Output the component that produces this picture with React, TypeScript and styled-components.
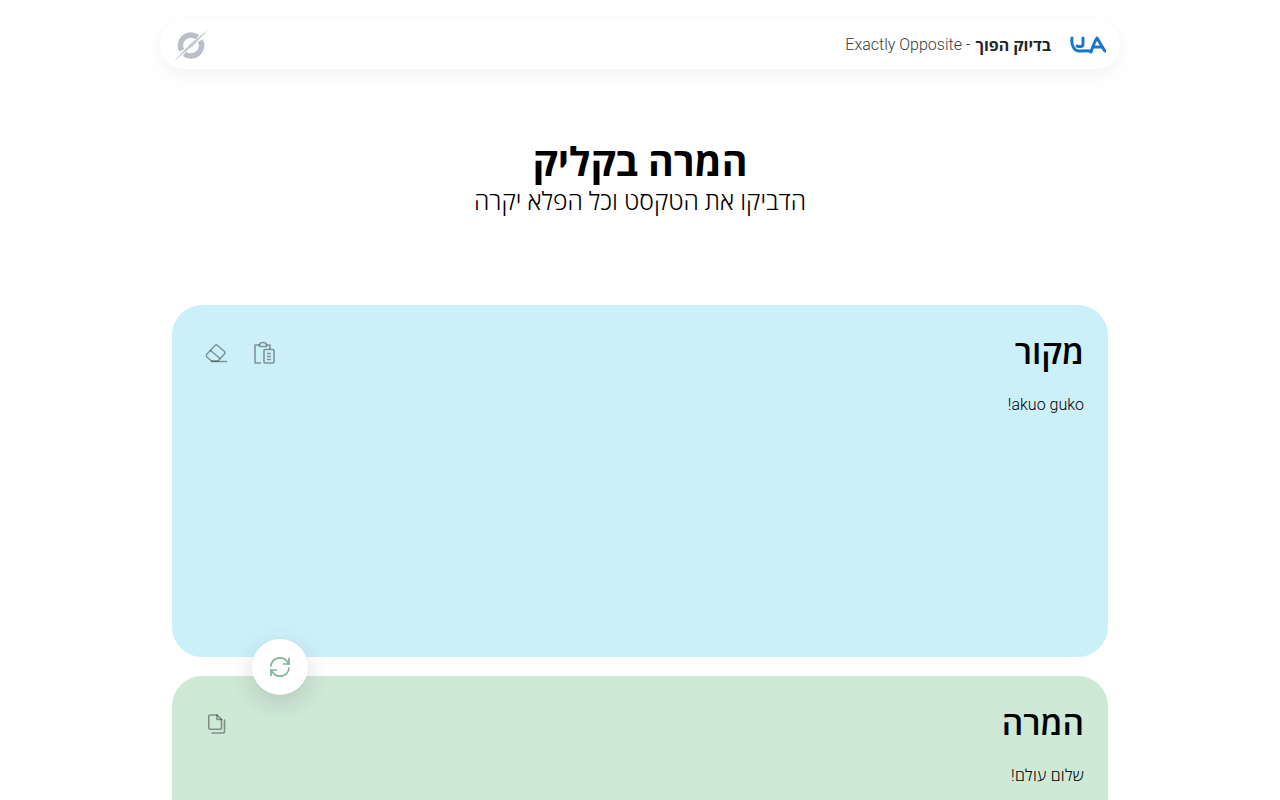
import styled, { createGlobalStyle } from "styled-components";

const GlobalStyle = createGlobalStyle`
  html, body {
    margin: 0;
    padding: 0;
    background: #fff;
    overflow: hidden;
    height: 800px;
  }
  body {
    font-family: Roboto, "Open Sans", "Noto Sans", sans-serif;
    color: #000;
  }
  * {
    box-sizing: border-box;
  }
`;

function BrandLogo() {
  return (
    <LogoImage width="38" height="22" viewBox="0 0 38 22" fill="none" stroke="#1976d2" strokeWidth="3" strokeLinecap="round" strokeLinejoin="round">
      <path d="M4 4 C3 11 6 17 11 17 C15 17 19 16.5 22 17" />
      <path d="M15 4 V10 C15 13 12 13 9 12" />
      <path d="M23 18 C25 12 27 7 29 4 C31 7 34 13 37 17" />
      <path d="M25.5 13 H34" />
    </LogoImage>
  );
}

function SyncMark() {
  return (
    <LogoImage width="38" height="34" viewBox="0 0 38 34" fill="none">
      <path d="M25.5 9.2 A10.5 10.5 0 0 0 9.7 22.4" stroke="#b9bec8" strokeWidth="5.5" />
      <path d="M28.3 12.6 A10.5 10.5 0 0 1 12.5 25.8" stroke="#b9bec8" strokeWidth="5.5" />
      <path d="M2 33 L18.4 15.8 L37 1 L20.6 18.2 Z" fill="#c6cad2" />
    </LogoImage>
  );
}

function EraserIcon() {
  return (
    <svg width="24" height="24" viewBox="0 0 24 24" fill="none" stroke="currentColor" strokeWidth="1.6" strokeLinejoin="round" strokeLinecap="round">
      <path d="M2.5 13.5 L11 4.5 Q12.2 3.4 13.5 4.5 L20.5 10.5 Q21.5 11.7 20.5 13 L14 20 H7.5 L2.8 16 Q2 14.7 2.5 13.5 Z" />
      <path d="M6.5 9.5 L15.5 17" />
      <path d="M7.5 20.5 H22.5" />
    </svg>
  );
}

function PasteIcon() {
  return (
    <svg width="24" height="24" viewBox="0 0 24 24" fill="none" stroke="currentColor" strokeWidth="1.6" strokeLinejoin="round">
      <path d="M7.5 4 H3 V22 H9" />
      <path d="M7.5 5.5 V3.5 Q8 1.5 11 1.5 Q14 1.5 14.5 3.5 V5.5 H7.5 Z" />
      <path d="M14.5 4 H18 V8" />
      <rect x="12" y="8.5" width="10" height="13.5" rx="1" />
      <path d="M15 12.5 H19 M15 15.5 H19 M15 18.5 H19" />
    </svg>
  );
}

function CopyIcon() {
  return (
    <svg width="24" height="24" viewBox="0 0 24 24" fill="none" stroke="currentColor" strokeWidth="1.6" strokeLinejoin="round" strokeLinecap="round">
      <path d="M6 3 H13 L17.5 7.5 V16 Q17.5 17.2 16.3 17.2 H6 Q4.8 17.2 4.8 16 V4.2 Q4.8 3 6 3 Z" />
      <path d="M13 3 V7.5 H17.5" />
      <path d="M20.5 8 V19.8 Q20.5 21 19.3 21 H8" />
    </svg>
  );
}

function SwapIcon() {
  return (
    <svg width="24" height="24" viewBox="0 0 24 24" fill="none" stroke="#7fb398" strokeWidth="1.7" strokeLinecap="round" strokeLinejoin="round">
      <path d="M3 11 A9 9 0 0 1 19.5 7 L21 9" />
      <path d="M21 3.5 V9 H15.5" />
      <path d="M21 13 A9 9 0 0 1 4.5 17 L3 15" />
      <path d="M3 20.5 V15 H8.5" />
    </svg>
  );
}

export default function App() {
  return (
    <Page dir="rtl">
      <GlobalStyle />
      <Header>
        <Brand>
          <BrandLogo />
          <BrandName>בדיוק הפוך</BrandName>
          <BrandSub>- Exactly Opposite</BrandSub>
        </Brand>
        <SyncMark />
      </Header>
      <Hero>
        <Title>המרה בקליק</Title>
        <Subtitle>הדביקו את הטקסט וכל הפלא יקרה</Subtitle>
      </Hero>
      <Panels>
        <Panel $tone="#ccf0f8" $height={352}>
          <PanelHead>
            <PanelTitle>מקור</PanelTitle>
            <Tools>
              <Tool aria-label="paste"><PasteIcon /></Tool>
              <Tool aria-label="clear"><EraserIcon /></Tool>
            </Tools>
          </PanelHead>
          <PanelText>akuo guko!</PanelText>
        </Panel>
        <SwapButton aria-label="swap"><SwapIcon /></SwapButton>
        <Panel $tone="#cfe9d7" $height={352}>
          <PanelHead>
            <PanelTitle>המרה</PanelTitle>
            <Tools>
              <Tool aria-label="copy"><CopyIcon /></Tool>
            </Tools>
          </PanelHead>
          <PanelText $spaced>שלום עולם!</PanelText>
        </Panel>
      </Panels>
    </Page>
  );
}

const Page = styled.div`
  width: 960px;
  margin: 0 auto;
  padding-top: 20px;
`;

const Header = styled.header`
  display: flex;
  justify-content: space-between;
  align-items: center;
  height: 49px;
  padding: 0 14px 0 12px;
  background: #fff;
  border-radius: 25px;
  box-shadow: 0 6px 20px rgba(0, 0, 0, 0.05);
`;

const LogoImage = styled.svg`
  filter: blur(0.4px);
`;

const Brand = styled.div`
  display: flex;
  align-items: center;
  font-size: 16px;
`;

const BrandName = styled.strong`
  margin: 0 17px 0 0;
  font-size: 16px;
  font-weight: 700;
  color: #212529;
`;

const BrandSub = styled.span`
  margin-right: 5px;
  font-weight: 300;
  color: #343a40;
`;

const Hero = styled.div`
  text-align: center;
  padding-top: 71px;
  height: 236px;
`;

const Title = styled.h1`
  margin: 0;
  font-size: 39.3px;
  line-height: 46px;
  font-weight: 700;
`;

const Subtitle = styled.p`
  margin: 0;
  font-size: 24.7px;
  line-height: 32px;
  font-weight: 300;
`;

const Panels = styled.main`
  position: relative;
  display: flex;
  flex-direction: column;
  gap: 19px;
  width: 936px;
  margin: 0 auto;
`;

const Panel = styled.section<{ $tone: string; $height: number }>`
  height: ${({ $height }) => $height}px;
  flex: none;
  padding: 26px 24px 0 24px;
  border-radius: 30px;
  background: ${({ $tone }) => $tone};
`;

const PanelHead = styled.div`
  display: flex;
  justify-content: space-between;
  align-items: center;
  height: 44px;
`;

const PanelTitle = styled.h2`
  margin: 0;
  font-size: 33.5px;
  line-height: 44px;
  font-weight: 600;
`;

const Tools = styled.div`
  display: flex;
  gap: 24px;
  color: rgba(0, 0, 0, 0.38);
  padding-left: 8px;
`;

const Tool = styled.button`
  display: flex;
  width: 24px;
  height: 24px;
  padding: 0;
  border: 0;
  background: none;
  color: inherit;
`;

const PanelText = styled.p<{ $spaced?: boolean }>`
  margin: 18px 0 0;
  font-size: 16px;
  line-height: 24px;
  font-weight: 300;
  color: #000;
  letter-spacing: ${({ $spaced }) => ($spaced ? "0.3px" : "0")};
`;

const SwapButton = styled.button`
  position: absolute;
  top: 334px;
  left: 80px;
  display: flex;
  align-items: center;
  justify-content: center;
  width: 56px;
  height: 56px;
  padding: 0;
  border: 0;
  border-radius: 50%;
  background: #fff;
  box-shadow: 0 8px 24px rgba(0, 0, 0, 0.14);
`;
